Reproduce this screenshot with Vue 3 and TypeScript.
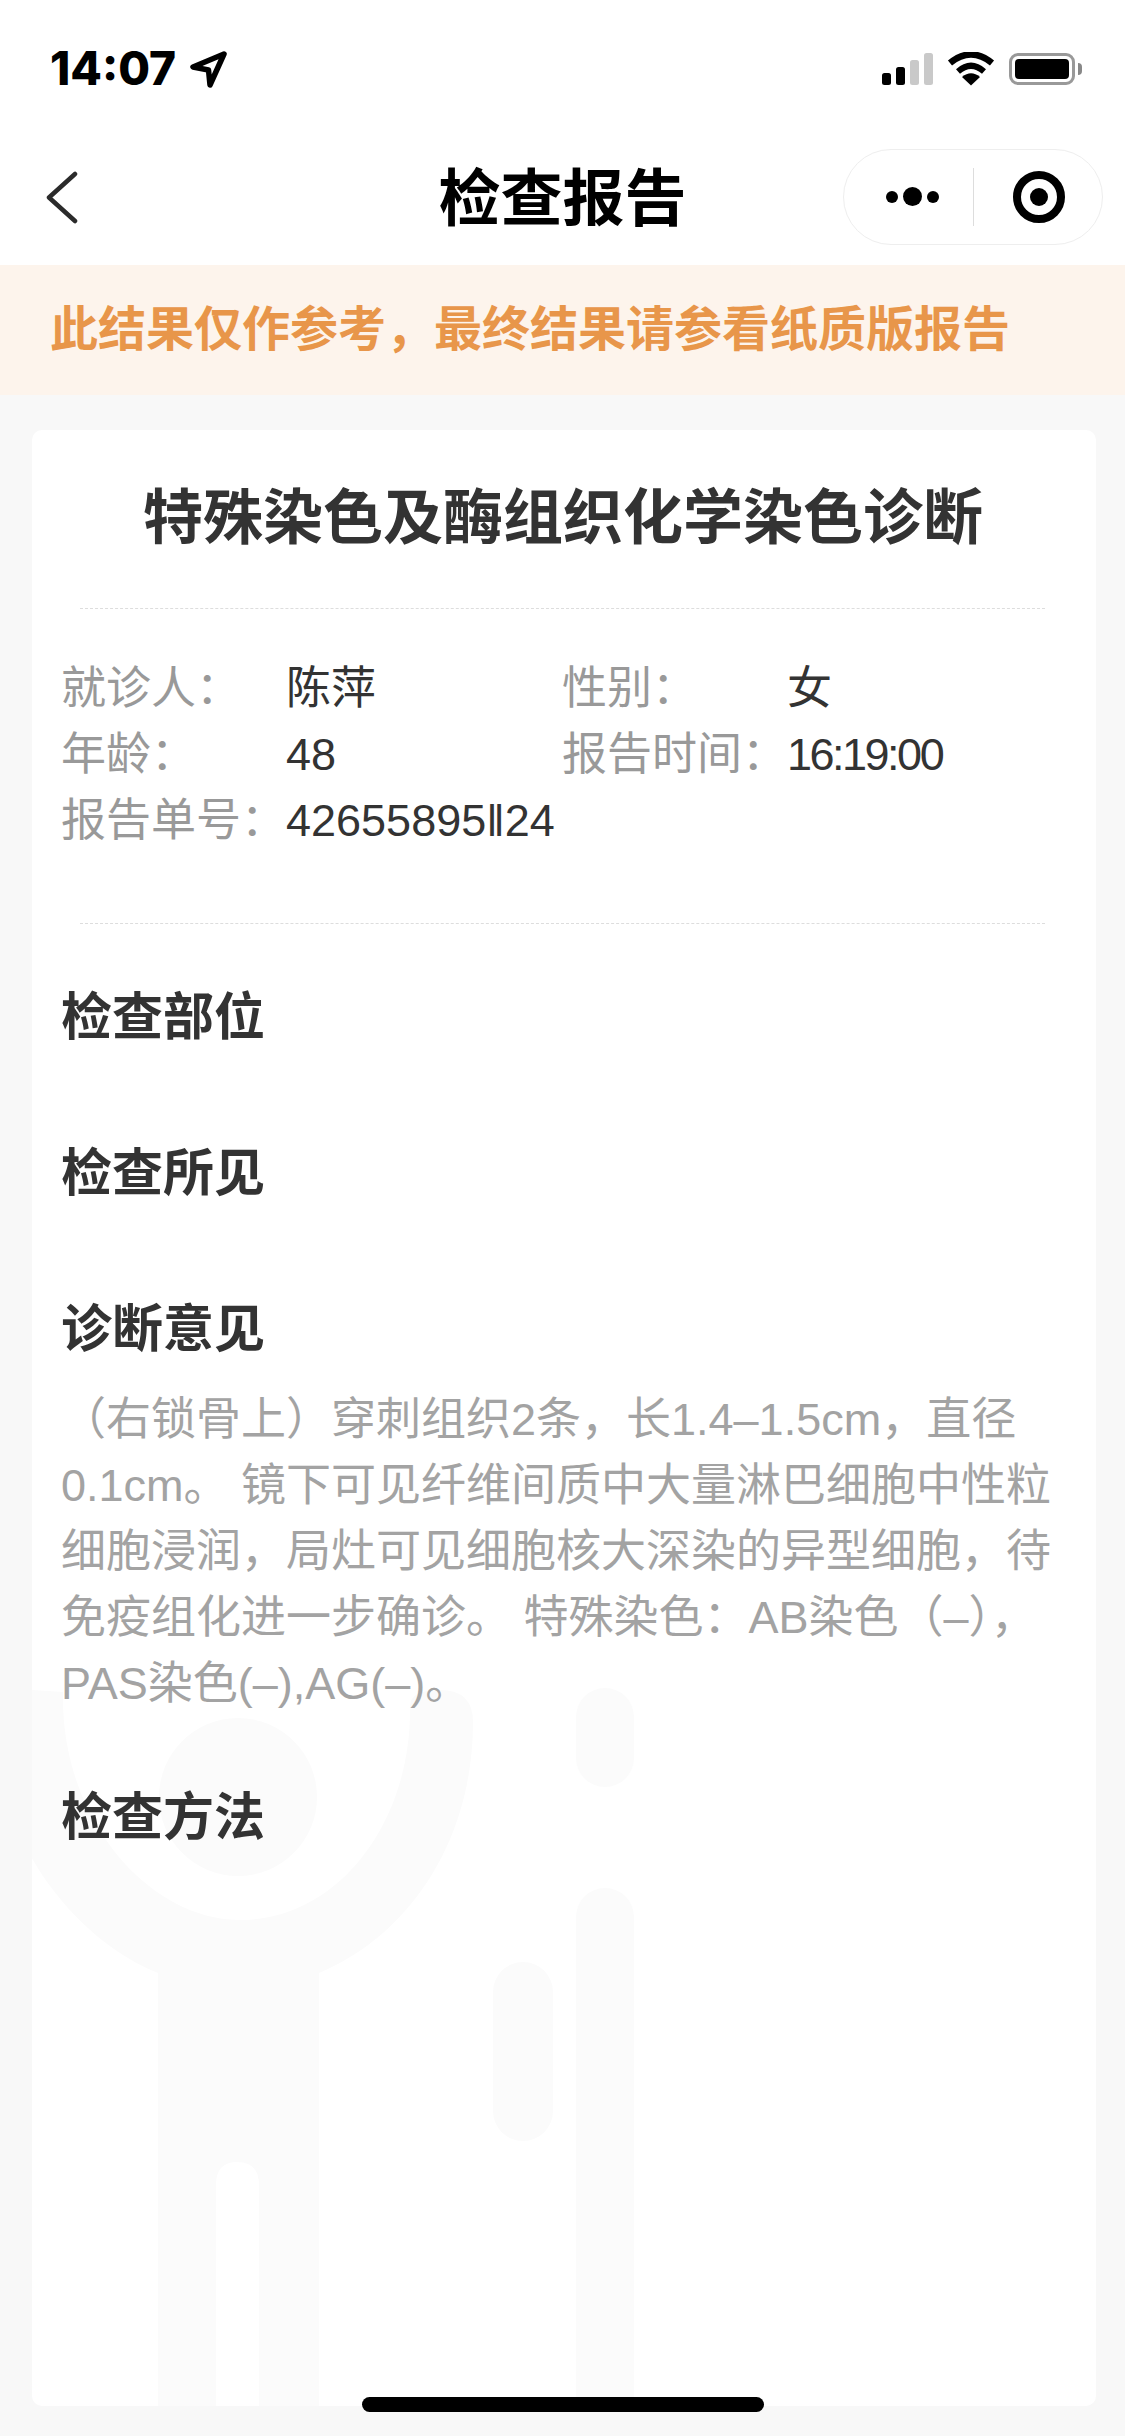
<template>
  <div class="page">
    <header class="status-bar">
      <div class="status-left">
        <span class="clock">14:07</span>
        <svg class="location" width="40" height="40" viewBox="0 0 40 40">
          <path d="M35 4 L4 17 L19.5 20 L21 35 Z" fill="none" stroke="#000" stroke-width="5.5" stroke-linejoin="round" />
        </svg>
      </div>
      <div class="status-right">
        <div class="signal">
          <i class="bar on b1"></i>
          <i class="bar on b2"></i>
          <i class="bar b3"></i>
          <i class="bar b4"></i>
        </div>
        <svg class="wifi" width="48" height="34" viewBox="0 0 48 34">
          <path d="M3 11 Q24 -6 45 11" fill="none" stroke="#000" stroke-width="6.5" />
          <path d="M11 19.5 Q24 8 37 19.5" fill="none" stroke="#000" stroke-width="6" />
          <path d="M24 33.5 L15 25 Q24 17.5 33 25 Z" fill="#000" />
        </svg>
        <div class="battery"><div class="battery-level"></div></div>
        <i class="battery-nub"></i>
      </div>
    </header>

    <nav class="nav-bar">
      <div class="nav-back">
        <svg width="34" height="54" viewBox="0 0 34 54">
          <path d="M30 3 L4 26.500 L30 50" fill="none" stroke="#2b2b2b" stroke-width="4.500" stroke-linecap="round" stroke-linejoin="round" />
        </svg>
      </div>
      <h1 class="nav-title">检查报告</h1>
      <div class="capsule">
        <div class="capsule-dots">
          <i class="dot"></i>
          <i class="dot big"></i>
          <i class="dot"></i>
        </div>
        <i class="capsule-line"></i>
        <div class="capsule-ring"><i></i></div>
      </div>
    </nav>

    <div class="notice">此结果仅作参考，最终结果请参看纸质版报告</div>

    <main class="card">
      <!-- faint logo printed behind the report text -->
      <svg class="watermark" width="1064" height="746" viewBox="32 1660 1064 746">
        <g fill="#fbfbfb">
          <path d="M63 1692 C60 1820 150 1920 240 1920 C340 1920 412 1820 410 1706 Q410 1690 440 1690 Q473 1690 473 1722 C473 1840 410 1935 319 1973 L319 2406 L259 2406 L259 2185 Q259 2162 237 2162 Q216 2162 216 2185 L216 2406 L158 2406 L158 1973 C100 1950 55 1900 30 1855 L30 1690 Z" />
          <circle cx="238" cy="1797" r="79" />
          <rect x="576" y="1688" width="58" height="99" rx="29" />
          <rect x="576" y="1888" width="58" height="540" rx="29" />
          <rect x="493" y="1962" width="60" height="179" rx="30" />
        </g>
      </svg>

      <h2 class="report-title">特殊染色及酶组织化学染色诊断</h2>
      <div class="rule"></div>

      <div class="info-grid">
        <template v-for="item in infoItems" :key="item.label">
          <span class="info-label">{{ item.label }}</span>
          <span class="info-value" :class="item.cls">{{ item.value }}</span>
        </template>
      </div>
      <div class="rule second"></div>

      <div class="sections">
        <section v-for="sec in sections" :key="sec.title" class="section">
          <h3 class="section-title">{{ sec.title }}</h3>
          <p v-if="sec.body" class="section-body">{{ sec.body }}</p>
        </section>
      </div>
    </main>

    <div class="home-indicator"></div>
  </div>
</template>

<script setup lang="ts">
interface InfoItem {
  label: string
  value: string
  cls?: string
}

const infoItems: InfoItem[] = [
  { label: '就诊人：', value: '陈萍' },
  { label: '性别：', value: '女' },
  { label: '年龄：', value: '48' },
  { label: '报告时间：', value: '16:19:00', cls: 'tight' },
  { label: '报告单号：', value: '42655895‖24' },
]

const sections = [
  { title: '检查部位', body: '' },
  { title: '检查所见', body: '' },
  {
    title: '诊断意见',
    body: '（右锁骨上）穿刺组织2条，长1.4–1.5cm，直径0.1cm。 镜下可见纤维间质中大量淋巴细胞中性粒细胞浸润，局灶可见细胞核大深染的异型细胞，待免疫组化进一步确诊。 特殊染色：AB染色（–），PAS染色(–),AG(–)。',
  },
  { title: '检查方法', body: '' },
]
</script>

<style>
html, body { margin: 0; background: #f8f8f8; }
</style>

<style scoped>
.page { position: relative; width: 1125px; height: 2436px; overflow: hidden; background: #f8f8f8; font-family: "Liberation Sans", "Noto Sans CJK SC", sans-serif; }

.status-bar { height: 130px; background: #fff; display: flex; justify-content: space-between; box-sizing: border-box; padding: 50px 43px 0 50px; }
.status-left { display: flex; align-items: flex-start; }
.clock { font-family: Inter, sans-serif; font-weight: 800; font-size: 46px; line-height: 37px; color: #000; }
.location { margin-left: 13px; }
.status-right { display: flex; align-items: flex-start; padding-top: 3px; }
.signal { display: flex; align-items: flex-end; gap: 5px; height: 32px; }
.bar { display: block; width: 9px; border-radius: 2.500px; background: #c9c9c9; }
.bar.on { background: #000; }
.b1 { height: 12px; }
.b2 { height: 18px; }
.b3 { height: 25px; }
.b4 { height: 32px; }
.wifi { margin-left: 14px; margin-top: -1px; }
.battery { margin-left: 14px; width: 66px; height: 32px; box-sizing: border-box; border: 3px solid #999; border-radius: 9px; padding: 3px; }
.battery-level { height: 100%; background: #000; border-radius: 4px; }
.battery-nub { display: block; width: 4px; height: 12px; margin: 10px 0 0 3px; background: #888; border-radius: 0 4px 4px 0; }

.nav-bar { height: 135px; background: #fff; display: grid; grid-template-columns: 1fr auto 1fr; align-items: center; }
.nav-back { padding-left: 45px; display: flex; }
.nav-title { margin: 4px 0 0; font-size: 62px; line-height: 70px; font-weight: 700; color: #000; }
.capsule { justify-self: end; margin-right: 22px; margin-top: -2px; width: 260px; height: 96px; box-sizing: border-box; border: 1px solid #eee; border-radius: 48px; display: flex; align-items: center; }
.capsule-dots { width: 129px; display: flex; align-items: center; justify-content: center; gap: 5px; padding-left: 8px; box-sizing: border-box; }
.dot { display: block; width: 12px; height: 12px; border-radius: 50%; background: #000; }
.dot.big { width: 19px; height: 19px; }
.capsule-line { display: block; width: 1px; height: 58px; background: #ddd; }
.capsule-ring { margin-left: 39px; width: 52px; height: 52px; box-sizing: border-box; border: 8px solid #000; border-radius: 50%; display: flex; align-items: center; justify-content: center; }
.capsule-ring i { display: block; width: 18px; height: 18px; border-radius: 50%; background: #000; }

.notice { height: 130px; box-sizing: border-box; padding-left: 50px; background: #fdf4ec; color: #e8964a; font-size: 48px; font-weight: 700; line-height: 130px; white-space: nowrap; }

.card { position: relative; margin: 35px 29px 0 32px; height: 1976px; box-sizing: border-box; padding: 47px 36px 0 29px; background: #fff; border-radius: 10px; overflow: hidden; }
.watermark { position: absolute; left: 0; bottom: 0; }
.report-title { position: relative; margin: 0; text-align: center; font-size: 60px; line-height: 84px; font-weight: 700; color: #333; padding-left: 5px; }
.rule { position: relative; width: 965px; margin: 47px 0 0 19px; border-top: 1px dashed #ddd; }
.rule.second { margin-top: 69px; }

.info-grid { position: relative; margin-top: 47px; display: grid; grid-template-columns: 225px 276px 225px 1fr; font-size: 45px; line-height: 66px; }
.info-label { color: #999; white-space: nowrap; }
.info-value { color: #333; white-space: nowrap; }
.tight { letter-spacing: -2.500px; }

.sections { position: relative; margin-top: 61px; }
.section { padding-bottom: 66px; }
.section-title { margin: 0 0 24px; font-size: 51px; line-height: 66px; font-weight: 700; color: #333; }
.section-body { margin: 0 0 2px; font-size: 45px; line-height: 66px; color: #a3a3a3; }

.home-indicator { position: absolute; left: 362px; top: 2397px; width: 402px; height: 15px; border-radius: 8px; background: #000; }
</style>
